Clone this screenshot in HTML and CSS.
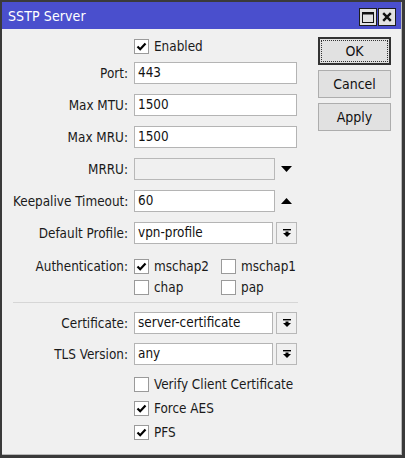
FILE: index.html
```html
<!DOCTYPE html>
<html>
<head>
<meta charset="utf-8">
<title>SSTP Server</title>
<link rel="stylesheet" href="styles.css">
</head>
<body>
<div class="window">
  <div class="titlebar">
    <span class="title">SSTP Server</span>
    <div class="tbtns">
      <span class="tbtn"><svg width="12" height="11" viewBox="0 0 12 11"><rect x="0.5" y="0.5" width="11" height="10" fill="none" stroke="#111" stroke-width="1"/><rect x="0" y="0" width="12" height="2.5" fill="#111"/></svg></span>
      <span class="tbtn"><svg width="10" height="10" viewBox="0 0 10 10"><path d="M1.2 1.2 L8.8 8.8 M8.8 1.2 L1.2 8.8" stroke="#111" stroke-width="2.4"/></svg></span>
    </div>
  </div>
  <div class="content">
    <div class="form">
      <div class="row">
        <span class="label"></span>
        <span class="cb checked"><span class="box"><svg width="13" height="13" viewBox="0 0 13 13"><path d="M2.5 6.5 L5.2 9.2 L10.5 3.5" fill="none" stroke="#000" stroke-width="2.2"/></svg></span>Enabled</span>
      </div>
      <div class="row field gap5">
        <span class="label">Port:</span>
        <span class="input">443</span>
      </div>
      <div class="row field">
        <span class="label">Max MTU:</span>
        <span class="input">1500</span>
      </div>
      <div class="row field">
        <span class="label">Max MRU:</span>
        <span class="input">1500</span>
      </div>
      <div class="row field">
        <span class="label">MRRU:</span>
        <span class="input short disabled"></span>
        <span class="arrow"><svg width="11" height="6" viewBox="0 0 11 6"><path d="M0 0 H11 L5.5 6 Z" fill="#000"/></svg></span>
      </div>
      <div class="row field">
        <span class="label">Keepalive Timeout:</span>
        <span class="input short">60</span>
        <span class="arrow"><svg width="11" height="6" viewBox="0 0 11 6"><path d="M0 6 H11 L5.5 0 Z" fill="#000"/></svg></span>
      </div>
      <div class="row field">
        <span class="label">Default Profile:</span>
        <span class="input combo">vpn-profile</span>
        <span class="ddbtn"><svg width="8" height="8" viewBox="0 0 8 8"><rect x="0" y="0" width="8" height="1.4" fill="#000"/><path d="M2.5 2.5 H5.5 V4 H8 L4 8 L0 4 H2.5 Z" fill="#000"/></svg></span>
      </div>
      <div class="auth">
        <span class="label">Authentication:</span>
        <div class="authgrid">
          <span class="cb checked"><span class="box"><svg width="13" height="13" viewBox="0 0 13 13"><path d="M2.5 6.5 L5.2 9.2 L10.5 3.5" fill="none" stroke="#000" stroke-width="2.2"/></svg></span>mschap2</span>
          <span class="cb"><span class="box"></span>mschap1</span>
          <span class="cb"><span class="box"></span>chap</span>
          <span class="cb"><span class="box"></span>pap</span>
        </div>
      </div>
      <div class="sep"></div>
      <div class="row field cert">
        <span class="label">Certificate:</span>
        <span class="input combo">server-certificate</span>
        <span class="ddbtn"><svg width="8" height="8" viewBox="0 0 8 8"><rect x="0" y="0" width="8" height="1.4" fill="#000"/><path d="M2.5 2.5 H5.5 V4 H8 L4 8 L0 4 H2.5 Z" fill="#000"/></svg></span>
      </div>
      <div class="row field tls">
        <span class="label">TLS Version:</span>
        <span class="input combo">any</span>
        <span class="ddbtn"><svg width="8" height="8" viewBox="0 0 8 8"><rect x="0" y="0" width="8" height="1.4" fill="#000"/><path d="M2.5 2.5 H5.5 V4 H8 L4 8 L0 4 H2.5 Z" fill="#000"/></svg></span>
      </div>
      <div class="checks">
        <span class="cb"><span class="box"></span>Verify Client Certificate</span>
        <span class="cb checked"><span class="box"><svg width="13" height="13" viewBox="0 0 13 13"><path d="M2.5 6.5 L5.2 9.2 L10.5 3.5" fill="none" stroke="#000" stroke-width="2.2"/></svg></span>Force AES</span>
        <span class="cb checked"><span class="box"><svg width="13" height="13" viewBox="0 0 13 13"><path d="M2.5 6.5 L5.2 9.2 L10.5 3.5" fill="none" stroke="#000" stroke-width="2.2"/></svg></span>PFS</span>
      </div>
    </div>
    <div class="actions">
      <span class="btn default"><span class="focus">OK</span></span>
      <span class="btn">Cancel</span>
      <span class="btn">Apply</span>
    </div>
  </div>
</div>
</body>
</html>
```
FILE: styles.css
```css
html, body {
  margin: 0;
  padding: 0;
}
body {
  background: #3a3a3a;
  width: 405px;
  height: 458px;
  overflow: hidden;
  font-family: "DejaVu Sans Condensed", "DejaVu Sans", sans-serif;
  font-stretch: condensed;
  font-size: 13.4px;
  color: #1a1a1a;
}
.window {
  margin: 2px 0 0 2px;
  width: 399px;
  height: 452px;
  border-right: 1px solid #b8b8b8;
  border-bottom: 1px solid #b8b8b8;
  background: #f0f0f0;
  display: flex;
  flex-direction: column;
}
.titlebar {
  height: 27px;
  background: #4a4fcd;
  display: flex;
  align-items: center;
  justify-content: space-between;
  padding: 0 5px 0 6px;
  flex: none;
}
.title {
  color: #fff;
  font-size: 14px;
  letter-spacing: 0.1px;
}
.tbtns {
  display: flex;
  gap: 1px;
  margin-top: 6px;
  align-self: flex-start;
}
.tbtn {
  width: 16px;
  height: 16px;
  border: 1px solid #1e1e1e;
  background: #e2e2e2;
  display: flex;
  align-items: center;
  justify-content: center;
}
.content {
  display: flex;
  flex: 1;
}
.form {
  width: 284px;
  padding: 6px 0 0 11px;
  display: flex;
  flex-direction: column;
}
.row {
  display: flex;
  align-items: center;
  height: 22px;
}
.row.field { margin-top: 10px; }
.row.field.gap5 { margin-top: 5px; }
.row.cert, .row.tls { margin-top: 9px; }
.label {
  width: 115px;
  margin-right: 6px;
  text-align: right;
  white-space: nowrap;
  flex: none;
}
.input {
  box-sizing: border-box;
  height: 22px;
  width: 163px;
  border: 1px solid #b4b4b4;
  background: #fff;
  padding: 0 3px;
  line-height: 20px;
  color: #111;
  white-space: nowrap;
}
.input.short { width: 141px; }
.input.combo { width: 139px; }
.input.disabled { background: #f0f0f0; border-color: #b8b8b8; }
.arrow {
  margin-left: 6px;
  display: flex;
  align-items: center;
}
.ddbtn {
  box-sizing: border-box;
  width: 21px;
  height: 22px;
  margin-left: 3px;
  border: 1px solid #b8b8b8;
  background: #f0f0f0;
  display: flex;
  align-items: center;
  justify-content: center;
}
.cb {
  display: flex;
  align-items: center;
  white-space: nowrap;
}
.box {
  box-sizing: border-box;
  width: 15px;
  height: 15px;
  border: 1px solid #9a9a9a;
  background: #fff;
  margin-right: 5px;
  display: flex;
  align-items: center;
  justify-content: center;
  flex: none;
}
.auth {
  display: flex;
  margin-top: 12px;
}
.auth .label {
  height: 21px;
  line-height: 21px;
}
.authgrid {
  display: grid;
  grid-template-columns: 87px 80px;
  grid-auto-rows: 21px;
}
.sep {
  margin-top: 4px;
  height: 1px;
  background: #d6d6d6;
  width: 285px;
}
.checks {
  margin-top: 7px;
  padding-left: 121px;
  display: flex;
  flex-direction: column;
}
.checks .cb { height: 24px; }
.actions {
  padding: 8px 0 0 21px;
  display: flex;
  flex-direction: column;
  gap: 5px;
}
.btn {
  box-sizing: border-box;
  width: 73px;
  height: 28px;
  border: 1px solid #adadad;
  background: #e1e1e1;
  display: flex;
  align-items: center;
  justify-content: center;
  font-size: 14px;
  color: #111;
}
.btn.default {
  border: 2px solid #333;
  padding: 1px;
}
.focus {
  box-sizing: border-box;
  width: 100%;
  height: 100%;
  border: 1px dotted #333;
  display: flex;
  align-items: center;
  justify-content: center;
}
```
